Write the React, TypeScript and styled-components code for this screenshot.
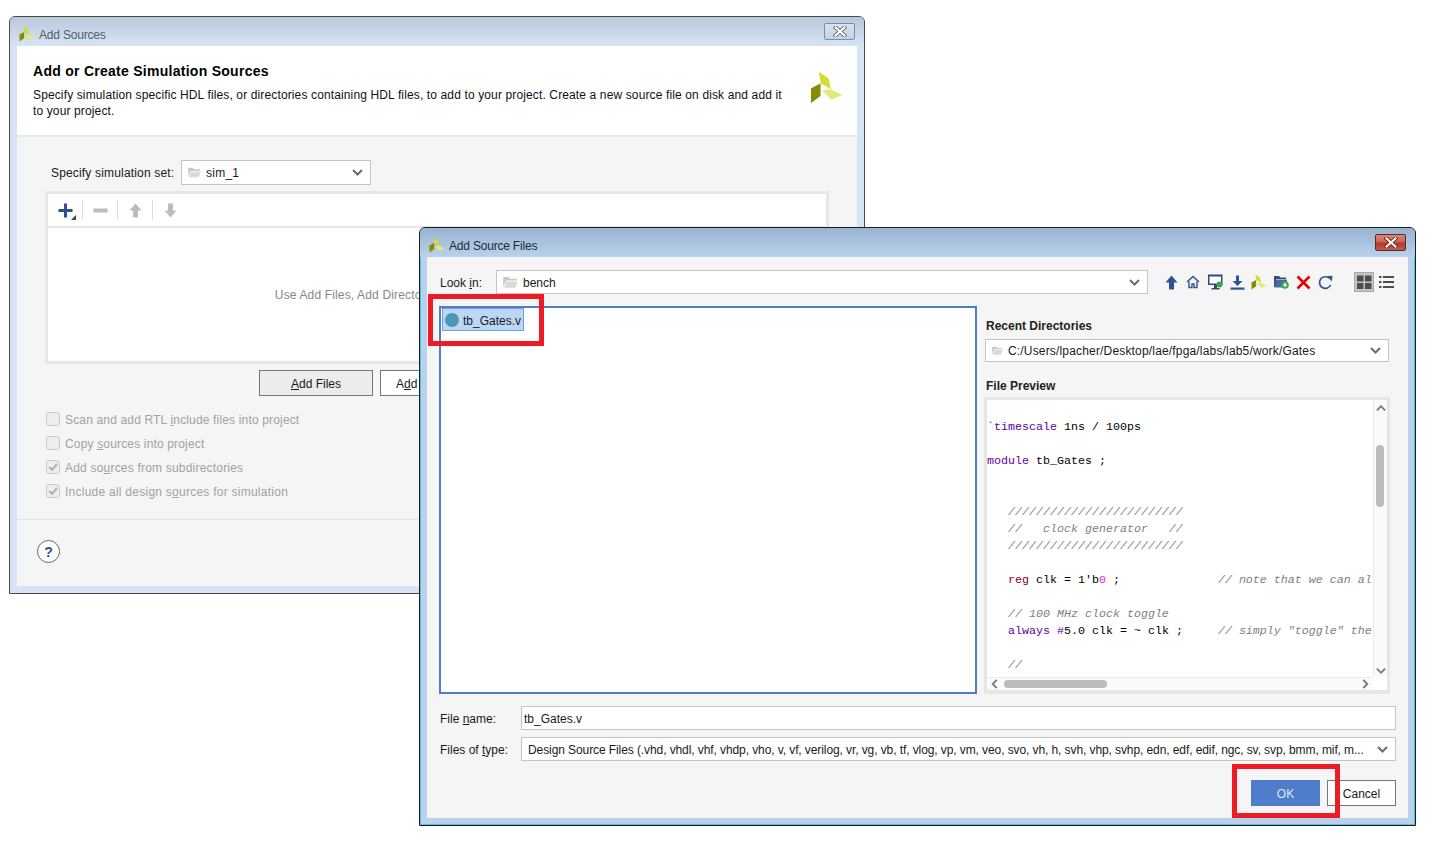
import React from 'react';
import styled, {createGlobalStyle, css} from 'styled-components';

const GlobalStyle = createGlobalStyle`
  html, body {
    margin: 0;
    background: #fff;
  }
  * {
    box-sizing: border-box;
  }
`;

const Canvas = styled.div`
  position: relative;
  width: 1435px;
  height: 848px;
  overflow: hidden;
  background: #fff;
  font-family: "Liberation Sans", Arial, sans-serif;
  font-size: 12px;
  color: #1a1a1a;
`;

const Dialog = styled.div<{$front?: boolean}>`
  position: absolute;
  display: flex;
  flex-direction: column;
  border-radius: 6px 6px 0 0;
  ${p => p.$front ? css`
    left: 419px;
    top: 227px;
    width: 997px;
    height: 599px;
    border: 1px solid #1d1d1d;
    background: #b9d1ea;
    box-shadow: inset -1px -1px 0 #55bfe0, inset 1px 0 0 #55bfe0;
  ` : css`
    left: 9px;
    top: 16px;
    width: 856px;
    height: 578px;
    border: 1px solid #4a4a4a;
    background: #d6e4f3;
  `}
`;

const TitleBar = styled.div<{$front?: boolean}>`
  flex: none;
  height: 29px;
  display: flex;
  align-items: center;
  gap: 4px;
  padding: 4px 9px 0 9px;
  border-radius: 5px 5px 0 0;
  background: ${p => p.$front ? 'linear-gradient(#99b3d0, #b9d1ea)' : 'linear-gradient(#b9c9da, #d6e4f3)'};
  color: ${p => p.$front ? '#1f2a38' : '#555e68'};
`;

const TitleText = styled.span`
  flex: 1;
  padding-top: 2px;
  letter-spacing: -0.2px;
`;

const CloseButton = styled.div<{$front?: boolean}>`
  width: 31px;
  height: 17px;
  margin-top: -4px;
  display: flex;
  align-items: center;
  justify-content: center;
  border-radius: 2px;
  ${p => p.$front ? css`
    border: 1px solid #5a2a30;
    background: linear-gradient(#d98a78 0, #c9604e 48%, #ae3a2c 52%, #c45a48 100%);
  ` : css`
    border: 1px solid #7d8ca4;
    background: linear-gradient(#dbe3ee, #c5d2e2);
  `}
`;

const OuterContent = styled.div`
  flex: 1;
  margin: 0 7px 7px;
  display: flex;
  flex-direction: column;
  background: #f5f5f5;
`;

const Header = styled.div`
  flex: none;
  height: 91px;
  display: flex;
  justify-content: space-between;
  padding: 17px 14px 0 16px;
  background: #fff;
  border-bottom: 2px solid #e8e8e8;
`;

const HeaderTitle = styled.div`
  font-size: 14px;
  line-height: 16px;
  font-weight: bold;
  letter-spacing: 0.27px;
  color: #000;
`;

const HeaderText = styled.div`
  width: 756px;
  margin-top: 8px;
  line-height: 16px;
  letter-spacing: 0.13px;
  color: #111;
`;

const HeaderLogo = styled.div`
  margin-top: 8px;
`;

const SetRow = styled.div`
  display: flex;
  align-items: center;
  margin: 23px 0 0 34px;
`;

const SetLabel = styled.span`
  width: 130px;
  letter-spacing: 0.17px;
`;

const Combo = styled.div<{$width: number; $height?: number; $lift?: boolean}>`
  flex: none;
  width: ${p => p.$width}px;
  height: ${p => p.$height || 24}px;
  display: flex;
  align-items: center;
  gap: 5px;
  padding: ${p => p.$lift ? '1px' : '0'} 7px 0 6px;
  background: #fff;
  border: 1px solid #c4c4c4;
  white-space: nowrap;
  overflow: hidden;
`;

const ComboText = styled.span<{$spread?: number}>`
  flex: 1;
  overflow: hidden;
  letter-spacing: ${p => p.$spread ?? 0}px;
`;

const SourceTable = styled.div`
  width: 784px;
  height: 173px;
  margin: 6px 0 0 28px;
  display: flex;
  flex-direction: column;
  border: 3px solid #e6e6e6;
  background: #fff;
`;

const TableTools = styled.div`
  flex: none;
  height: 34px;
  display: flex;
  align-items: center;
  border-bottom: 2px solid #e6e6e6;
`;

const ToolSlot = styled.div<{$divider?: boolean}>`
  position: relative;
  width: 35px;
  height: 20px;
  display: flex;
  align-items: center;
  justify-content: center;
  border-right: ${p => p.$divider ? '1px solid #dcdcdc' : 'none'};
`;

const MenuCorner = styled.span`
  position: absolute;
  right: 6px;
  bottom: 0;
  width: 0;
  height: 0;
  border-left: 5px solid transparent;
  border-bottom: 5px solid #444;
`;

const TableHint = styled.div`
  flex: 1;
  display: flex;
  align-items: center;
  justify-content: center;
  letter-spacing: 0.15px;
  color: #888;
  white-space: nowrap;
`;

const AddRow = styled.div`
  display: flex;
  gap: 7px;
  margin: 6px 0 0 242px;
`;

const PushButton = styled.div<{$tone?: 'pressed' | 'primary'}>`
  flex: none;
  height: 26px;
  display: flex;
  align-items: center;
  justify-content: center;
  padding-top: 2px;
  border: 1px solid #777;
  background: #fff;
  ${p => p.$tone === 'pressed' && css`
    background: #ececec;
  `}
  ${p => p.$tone === 'primary' && css`
    border-color: #4f7ccb;
    background: #4f7ccb;
    color: #dfe8f7;
  `}
`;

const WideButton = styled(PushButton)`
  width: 114px;
`;

const DialogButton = styled(PushButton)`
  width: 69px;
`;

const Options = styled.div`
  display: flex;
  flex-direction: column;
  gap: 10px;
  margin: 16px 0 0 29px;
`;

const Option = styled.div`
  height: 14px;
  display: flex;
  align-items: center;
  gap: 5px;
  color: #a2a2a2;
`;

const OptionText = styled.span<{$spread: number}>`
  padding-top: 2px;
  letter-spacing: ${p => p.$spread}px;
`;

const CheckBox = styled.span`
  width: 14px;
  height: 14px;
  display: flex;
  align-items: center;
  justify-content: center;
  border: 1px solid #c9c9c9;
  border-radius: 3px;
  background: #eeeeee;
`;

const Footer = styled.div`
  flex: 1;
  margin-top: 21px;
  padding: 20px 0 0 20px;
  border-top: 1px solid #e4e4e4;
`;

const HelpButton = styled.div`
  width: 23px;
  height: 23px;
  display: flex;
  align-items: center;
  justify-content: center;
  border: 1px solid #666;
  border-radius: 50%;
  background: #fff;
  font-size: 14px;
  font-weight: bold;
  color: #2f4f8f;
`;

const InnerContent = styled(OuterContent)`
  padding: 13px 12px 0;
`;

const LookRow = styled.div`
  height: 24px;
  display: flex;
  align-items: center;
`;

const FieldLabel = styled.span<{$width: number}>`
  flex: none;
  width: ${p => p.$width}px;
  padding: 2px 0 0 1px;
`;

const NavTools = styled.div`
  display: flex;
  align-items: center;
  margin-left: 12px;
`;

const NavIcon = styled.div`
  width: 22px;
  display: flex;
  justify-content: center;
`;

const ViewToggle = styled.div<{$active?: boolean}>`
  width: 20px;
  height: 20px;
  display: flex;
  align-items: center;
  justify-content: center;
  margin-left: ${p => p.$active ? '18px' : '2px'};
  ${p => p.$active && css`
    background: #c4c4c4;
    border: 1px solid #aaa;
  `}
`;

const MainArea = styled.div`
  height: 388px;
  margin-top: 12px;
  display: flex;
`;

const FileList = styled.div`
  flex: none;
  width: 538px;
  padding: 0 1px;
  background: #fff;
  border: 2px solid #4f7ccb;
`;

const FileItem = styled.div`
  width: 82px;
  height: 23px;
  display: flex;
  align-items: center;
  gap: 4px;
  padding-left: 2px;
  background: #bcd7f5;
  border: 1px solid #69a3dd;
`;

const FileDot = styled.span`
  width: 14px;
  height: 14px;
  border-radius: 50%;
  background: #4d97b5;
`;

const FileName = styled.span`
  padding-top: 2px;
`;

const SideColumn = styled.div`
  flex: none;
  width: 406px;
  margin-left: 7px;
  display: flex;
  flex-direction: column;
`;

const SideLabel = styled.div<{$top: number}>`
  height: 14px;
  line-height: 14px;
  margin: ${p => p.$top}px 0 0 2px;
  font-weight: bold;
  color: #222;
`;

const RecentCombo = styled(Combo)`
  margin: 6px 0 0 1px;
`;

const Preview = styled.div`
  height: 297px;
  margin-top: 4px;
  display: grid;
  grid-template-columns: 386px 14px;
  grid-template-rows: 277px 13px;
  border: 3px solid #e6e6e6;
  border-bottom-width: 4px;
  background: #fff;
`;

const CodeView = styled.div`
  overflow: hidden;
  padding-top: 2px;
  font-family: "Liberation Mono", "Courier New", monospace;
  font-size: 11.67px;
  line-height: 17px;
  color: #000;
  white-space: pre;
`;

const CodeLine = styled.div`
  height: 17px;
`;

const Token = styled.span<{$kind: 'keyword' | 'type' | 'comment' | 'number'}>`
  ${p => p.$kind === 'keyword' && 'color: #5c00a3;'}
  ${p => p.$kind === 'type' && 'color: #8f0030;'}
  ${p => p.$kind === 'number' && 'color: #f020e0;'}
  ${p => p.$kind === 'comment' && css`
    color: #808080;
    font-style: italic;
  `}
`;

const VScroll = styled.div`
  position: relative;
  border-left: 1px solid #eaeaea;
  background: #fafafa;
`;

const HScroll = styled.div`
  position: relative;
  border-top: 1px solid #eaeaea;
  background: #fafafa;
`;

const ScrollCorner = styled.div`
  background: #fff;
`;

const VThumb = styled.div`
  position: absolute;
  left: 2px;
  top: 45px;
  width: 8px;
  height: 62px;
  border-radius: 4px;
  background: #bcbcbc;
`;

const HThumb = styled.div`
  position: absolute;
  left: 17px;
  top: 2px;
  width: 103px;
  height: 8px;
  border-radius: 4px;
  background: #bcbcbc;
`;

const ScrollArrow = styled.span<{$place: 'top' | 'bottom' | 'left' | 'right'}>`
  position: absolute;
  display: flex;
  ${p => p.$place === 'top' && 'top: 3px; left: 2px;'}
  ${p => p.$place === 'bottom' && 'bottom: 1px; left: 2px;'}
  ${p => p.$place === 'left' && 'top: 1px; left: 3px;'}
  ${p => p.$place === 'right' && 'top: 1px; right: 3px;'}
`;

const FormRow = styled.div<{$top: number}>`
  height: 24px;
  margin-top: ${p => p.$top}px;
  display: flex;
  align-items: center;
`;

const NameInput = styled.div`
  width: 875px;
  height: 24px;
  display: flex;
  align-items: center;
  padding: 2px 0 0 2px;
  background: #fff;
  border: 1px solid #c4c4c4;
`;

const ActionRow = styled.div`
  display: flex;
  justify-content: flex-end;
  gap: 7px;
  margin-top: 19px;
`;

const Highlight = styled.div<{$left: number; $top: number; $width: number; $height: number}>`
  position: absolute;
  left: ${p => p.$left}px;
  top: ${p => p.$top}px;
  width: ${p => p.$width}px;
  height: ${p => p.$height}px;
  border: 5px solid #ed1c24;
`;

const Logo = ({size}: {size: number}) => (
  <svg width={size} height={size} viewBox="510 215 100 100">
    <path d="M537 217 L567 238 L573 270 L543 252 Z" fill="#d4dd2f"/>
    <path d="M546 273 L574 270 L608 288 L575 302 Z" fill="#e3ea7a"/>
    <path d="M513 268 L542 252 L542 291 L513 312 Z" fill="#878b00"/>
  </svg>
);

const CloseMark = ({front}: {front?: boolean}) => (
  <svg width="14" height="11" viewBox="0 0 14 11">
    <path d="M2.5 1.5 L11.5 9.5 M11.5 1.5 L2.5 9.5" stroke={front ? '#7a2a22' : '#6c7480'} strokeWidth="4" strokeLinecap="square"/>
    <path d="M2.5 1.5 L11.5 9.5 M11.5 1.5 L2.5 9.5" stroke="#fff" strokeWidth="2" strokeLinecap="square"/>
  </svg>
);

const Chevron = ({dir = 'down', size = 11, color = '#6b6b6b'}: {dir?: 'down' | 'up' | 'left' | 'right'; size?: number; color?: string}) => {
  const paths = {
    down: 'M1 3 L5.5 7.5 L10 3',
    up: 'M1 8 L5.5 3.5 L10 8',
    left: 'M7.5 1 L3 5.5 L7.5 10',
    right: 'M3.5 1 L8 5.5 L3.5 10',
  };
  return (
    <svg width={size} height={size} viewBox="0 0 11 11">
      <path d={paths[dir]} fill="none" stroke={color} strokeWidth="2"/>
    </svg>
  );
};

const FolderIcon = ({width = 13}: {width?: number}) => (
  <svg width={width} height={width * 0.85} viewBox="0 0 16 14">
    <path d="M0 2 Q0 1 1 1 L6 1 L7.5 3 L15 3 L15 5 L3 5 L0 12 Z" fill="#c8c8c8"/>
    <path d="M3.5 6 L16 6 L13.5 13 L0.8 13 Z" fill="#dadada"/>
  </svg>
);

const ArrowIcon = ({dir, color}: {dir: 'up' | 'down'; color: string}) => (
  <svg width="13" height="15" viewBox="0 0 13 15">
    <path d={dir === 'up' ? 'M6.5 0.5 L12.5 7.5 L9 7.5 L9 14.5 L4 14.5 L4 7.5 L0.5 7.5 Z' : 'M4 0.5 L9 0.5 L9 7.5 L12.5 7.5 L6.5 14.5 L0.5 7.5 L4 7.5 Z'} fill={color}/>
  </svg>
);

const PlusIcon = () => (
  <svg width="15" height="15" viewBox="0 0 15 15">
    <path d="M6 0.5 H9 V6 H14.5 V9 H9 V14.5 H6 V9 H0.5 V6 H6 Z" fill="#2f4f8f"/>
  </svg>
);

const MinusIcon = () => (
  <svg width="15" height="15" viewBox="0 0 15 15">
    <rect x="0.5" y="5.5" width="14" height="4" fill="#bcbcbc"/>
  </svg>
);

const HomeIcon = () => (
  <svg width="14" height="14" viewBox="0 0 14 14">
    <path d="M1 7 L7 1.5 L13 7" fill="none" stroke="#34558f" strokeWidth="1.6"/>
    <path d="M3 6.5 V12.5 H6 V9 H8 V12.5 H11 V6.5" fill="none" stroke="#34558f" strokeWidth="1.4"/>
  </svg>
);

const MonitorIcon = () => (
  <svg width="15" height="16" viewBox="0 0 15 16">
    <path d="M0 0.5 H14.5 V11 H0 Z" fill="#2b4a80"/>
    <rect x="1.5" y="2.5" width="11.5" height="7" fill="#fff"/>
    <rect x="6" y="11" width="3" height="3" fill="#2b4a80"/>
    <rect x="3.5" y="14" width="8" height="1.5" fill="#2b4a80"/>
    <circle cx="11.5" cy="10.5" r="3" fill="#3da650"/>
  </svg>
);

const DownloadIcon = () => (
  <svg width="15" height="15" viewBox="0 0 15 15">
    <path d="M6 0.5 H9 V6 H12.5 L7.5 11 L2.5 6 H6 Z" fill="#2f5590"/>
    <rect x="0.5" y="12.5" width="14" height="2.2" fill="#2f5590"/>
  </svg>
);

const NewFolderIcon = () => (
  <svg width="15" height="14" viewBox="0 0 15 14">
    <path d="M0 1 H5 L6.5 2.5 H12 V4 H2 V12 H0 Z" fill="#2f4f85"/>
    <path d="M2 4.5 H13 V12.5 H0.5 Z" fill="#4a6a9e"/>
    <circle cx="11" cy="10" r="3.8" fill="#3da650"/>
    <path d="M9 10 H13 M11 8 V12" stroke="#fff" strokeWidth="1.2"/>
  </svg>
);

const RedCross = () => (
  <svg width="15" height="15" viewBox="0 0 15 15">
    <path d="M1.5 1.5 L13.5 13.5 M13.5 1.5 L1.5 13.5" stroke="#e60000" strokeWidth="2.6"/>
  </svg>
);

const RefreshIcon = () => (
  <svg width="15" height="15" viewBox="0 0 15 15">
    <path d="M12.6 10 A5.8 5.8 0 1 1 11.2 3.2" fill="none" stroke="#34558f" strokeWidth="1.7"/>
    <path d="M9 1 L14.5 0.8 L13.8 6.5 Z" fill="#34558f"/>
  </svg>
);

const GridIcon = () => (
  <svg width="15" height="15" viewBox="0 0 15 15">
    <rect x="0" y="0.5" width="6.5" height="6" fill="#4d4d4d"/>
    <rect x="8" y="0.5" width="6.5" height="6" fill="#4d4d4d"/>
    <rect x="0" y="8" width="6.5" height="6" fill="#4d4d4d"/>
    <rect x="8" y="8" width="6.5" height="6" fill="#4d4d4d"/>
  </svg>
);

const ListIcon = () => (
  <svg width="15" height="14" viewBox="0 0 15 14">
    <path d="M0 2 H2.5 M4 2 H15 M0 7 H2.5 M4 7 H15 M0 12 H2.5 M4 12 H15" stroke="#4d4d4d" strokeWidth="2"/>
  </svg>
);

const TickIcon = () => (
  <svg width="10" height="10" viewBox="0 0 10 10">
    <path d="M1.2 5 L4 7.8 L9 2" fill="none" stroke="#aeaeae" strokeWidth="2"/>
  </svg>
);

const codeLines: React.ReactNode[] = [
  '',
  <><Token $kind="keyword">`timescale</Token> 1ns / 100ps</>,
  '',
  <><Token $kind="keyword">module</Token> tb_Gates ;</>,
  '',
  '',
  <Token $kind="comment">{'   /////////////////////////'}</Token>,
  <Token $kind="comment">{'   //   clock generator   //'}</Token>,
  <Token $kind="comment">{'   /////////////////////////'}</Token>,
  '',
  <>{'   '}<Token $kind="type">reg</Token> clk = 1'b<Token $kind="number">0</Token> ;{'              '}<Token $kind="comment">// note that we can al</Token></>,
  '',
  <Token $kind="comment">{'   // 100 MHz clock toggle'}</Token>,
  <>{'   '}<Token $kind="keyword">always</Token> <Token $kind="keyword">#</Token>5.0 clk = ~ clk ;{'     '}<Token $kind="comment">// simply "toggle" the</Token></>,
  '',
  <Token $kind="comment">{'   //'}</Token>,
];

export default function App() {
  return (
    <Canvas>
      <GlobalStyle/>

      <Dialog>
        <TitleBar>
          <Logo size={16}/>
          <TitleText>Add Sources</TitleText>
          <CloseButton><CloseMark/></CloseButton>
        </TitleBar>
        <OuterContent>
          <Header>
            <div>
              <HeaderTitle>Add or Create Simulation Sources</HeaderTitle>
              <HeaderText>
                Specify simulation specific HDL files, or directories containing HDL files, to add to your project. Create a new source file on disk and add it to your project.
              </HeaderText>
            </div>
            <HeaderLogo><Logo size={33}/></HeaderLogo>
          </Header>

          <SetRow>
            <SetLabel>Specify simulation set:</SetLabel>
            <Combo $width={190} $height={25}>
              <FolderIcon/>
              <ComboText $spread={0.25}>sim_1</ComboText>
              <Chevron/>
            </Combo>
          </SetRow>

          <SourceTable>
            <TableTools>
              <ToolSlot $divider><PlusIcon/><MenuCorner/></ToolSlot>
              <ToolSlot $divider><MinusIcon/></ToolSlot>
              <ToolSlot $divider><ArrowIcon dir="up" color="#bcbcbc"/></ToolSlot>
              <ToolSlot><ArrowIcon dir="down" color="#bcbcbc"/></ToolSlot>
            </TableTools>
            <TableHint>Use Add Files, Add Directories or Create File buttons below</TableHint>
          </SourceTable>

          <AddRow>
            <WideButton $tone="pressed"><span><u>A</u>dd Files</span></WideButton>
            <WideButton><span>A<u>d</u>d Directories</span></WideButton>
          </AddRow>

          <Options>
            <Option><CheckBox/><OptionText $spread={0.16}>Scan and add RTL <u>i</u>nclude files into project</OptionText></Option>
            <Option><CheckBox/><OptionText $spread={0.16}>Copy <u>s</u>ources into project</OptionText></Option>
            <Option><CheckBox><TickIcon/></CheckBox><OptionText $spread={0.2}>Add so<u>u</u>rces from subdirectories</OptionText></Option>
            <Option><CheckBox><TickIcon/></CheckBox><OptionText $spread={0.25}>Include all design s<u>o</u>urces for simulation</OptionText></Option>
          </Options>

          <Footer><HelpButton>?</HelpButton></Footer>
        </OuterContent>
      </Dialog>

      <Dialog $front>
        <TitleBar $front>
          <Logo size={16}/>
          <TitleText>Add Source Files</TitleText>
          <CloseButton $front><CloseMark front/></CloseButton>
        </TitleBar>
        <InnerContent>
          <LookRow>
            <FieldLabel $width={57}>Look <u>i</u>n:</FieldLabel>
            <Combo $width={652} $lift>
              <FolderIcon width={15}/>
              <ComboText>bench</ComboText>
              <Chevron/>
            </Combo>
            <NavTools>
              <NavIcon><ArrowIcon dir="up" color="#2f5590"/></NavIcon>
              <NavIcon><HomeIcon/></NavIcon>
              <NavIcon><MonitorIcon/></NavIcon>
              <NavIcon><DownloadIcon/></NavIcon>
              <NavIcon><Logo size={16}/></NavIcon>
              <NavIcon><NewFolderIcon/></NavIcon>
              <NavIcon><RedCross/></NavIcon>
              <NavIcon><RefreshIcon/></NavIcon>
              <ViewToggle $active><GridIcon/></ViewToggle>
              <ViewToggle><ListIcon/></ViewToggle>
            </NavTools>
          </LookRow>

          <MainArea>
            <FileList>
              <FileItem>
                <FileDot/>
                <FileName>tb_Gates.v</FileName>
              </FileItem>
            </FileList>
            <SideColumn>
              <SideLabel $top={13}>Recent Directories</SideLabel>
              <RecentCombo $width={404} $height={23}>
                <FolderIcon width={11}/>
                <ComboText $spread={0.17}>C:/Users/lpacher/Desktop/lae/fpga/labs/lab5/work/Gates</ComboText>
                <Chevron/>
              </RecentCombo>
              <SideLabel $top={17}>File Preview</SideLabel>
              <Preview>
                <CodeView>
                  {codeLines.map((line, i) => <CodeLine key={i}>{line}</CodeLine>)}
                </CodeView>
                <VScroll>
                  <ScrollArrow $place="top"><Chevron dir="up" size={10} color="#777"/></ScrollArrow>
                  <VThumb/>
                  <ScrollArrow $place="bottom"><Chevron size={10} color="#777"/></ScrollArrow>
                </VScroll>
                <HScroll>
                  <ScrollArrow $place="left"><Chevron dir="left" size={10} color="#777"/></ScrollArrow>
                  <HThumb/>
                  <ScrollArrow $place="right"><Chevron dir="right" size={10} color="#777"/></ScrollArrow>
                </HScroll>
                <ScrollCorner/>
              </Preview>
            </SideColumn>
          </MainArea>

          <FormRow $top={12}>
            <FieldLabel $width={82}>File <u>n</u>ame:</FieldLabel>
            <NameInput>tb_Gates.v</NameInput>
          </FormRow>
          <FormRow $top={7}>
            <FieldLabel $width={82}>Files of <u>t</u>ype:</FieldLabel>
            <Combo $width={875} $lift>
              <ComboText $spread={-0.09}>Design Source Files (.vhd, vhdl, vhf, vhdp, vho, v, vf, verilog, vr, vg, vb, tf, vlog, vp, vm, veo, svo, vh, h, svh, vhp, svhp, edn, edf, edif, ngc, sv, svp, bmm, mif, m...</ComboText>
              <Chevron/>
            </Combo>
          </FormRow>

          <ActionRow>
            <DialogButton $tone="primary">OK</DialogButton>
            <DialogButton>Cancel</DialogButton>
          </ActionRow>
        </InnerContent>
      </Dialog>

      <Highlight $left={428} $top={294} $width={116} $height={52}/>
      <Highlight $left={1232} $top={764} $width={108} $height={54}/>
    </Canvas>
  );
}
